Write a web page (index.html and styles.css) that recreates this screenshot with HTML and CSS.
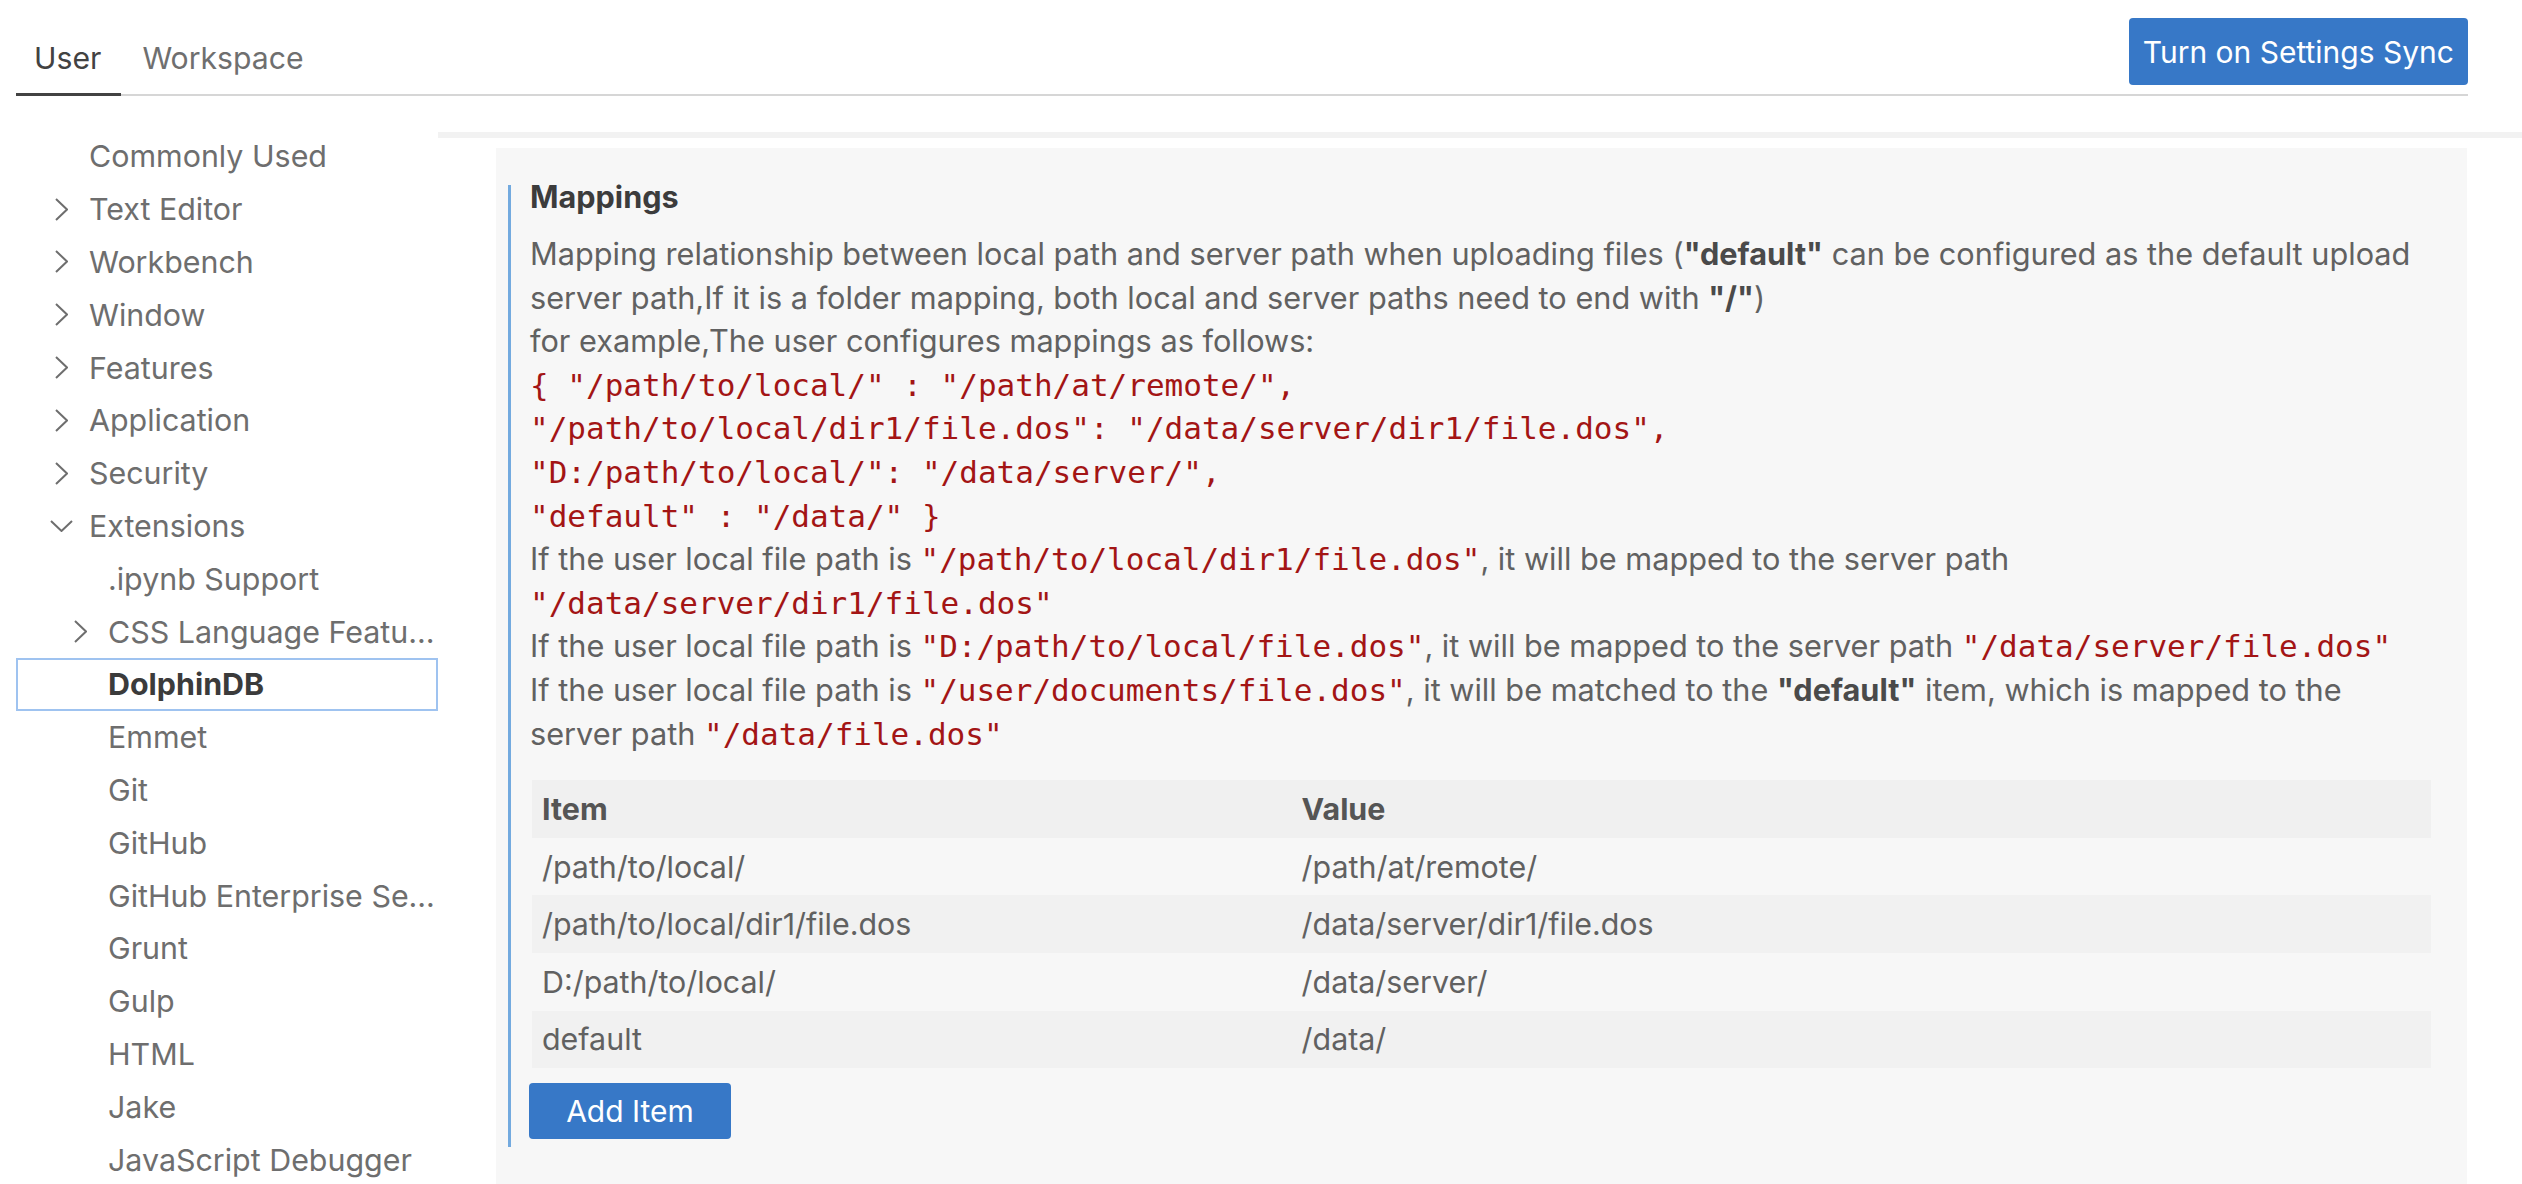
FILE: index.html
```html
<!DOCTYPE html>
<html>
<head>
<meta charset="utf-8">
<link rel="stylesheet" href="styles.css">
</head>
<body>
<div class="topbar">
  <div class="tabs">
    <div class="tab active">User</div>
    <div class="tab">Workspace</div>
  </div>
  <button class="sync-btn">Turn on Settings Sync</button>
</div>
<div class="main">
  <nav class="toc">
    <div class="row l1">Commonly Used</div>
    <div class="row l1"><svg class="chev-r" viewBox="0 0 13 23"><polyline points="1,1 12,11.5 1,22"/></svg>Text Editor</div>
    <div class="row l1"><svg class="chev-r" viewBox="0 0 13 23"><polyline points="1,1 12,11.5 1,22"/></svg>Workbench</div>
    <div class="row l1"><svg class="chev-r" viewBox="0 0 13 23"><polyline points="1,1 12,11.5 1,22"/></svg>Window</div>
    <div class="row l1"><svg class="chev-r" viewBox="0 0 13 23"><polyline points="1,1 12,11.5 1,22"/></svg>Features</div>
    <div class="row l1"><svg class="chev-r" viewBox="0 0 13 23"><polyline points="1,1 12,11.5 1,22"/></svg>Application</div>
    <div class="row l1"><svg class="chev-r" viewBox="0 0 13 23"><polyline points="1,1 12,11.5 1,22"/></svg>Security</div>
    <div class="row l1 open"><svg class="chev-d" viewBox="0 0 23 12"><polyline points="1,1 11.5,11 22,1"/></svg>Extensions</div>
    <div class="row l2">.ipynb Support</div>
    <div class="row l2"><svg class="chev-r" viewBox="0 0 13 23"><polyline points="1,1 12,11.5 1,22"/></svg><span class="lbl">CSS Language Features</span></div>
    <div class="row l2 selected">DolphinDB</div>
    <div class="row l2">Emmet</div>
    <div class="row l2">Git</div>
    <div class="row l2">GitHub</div>
    <div class="row l2"><span class="lbl">GitHub Enterprise Server Authentication</span></div>
    <div class="row l2">Grunt</div>
    <div class="row l2">Gulp</div>
    <div class="row l2">HTML</div>
    <div class="row l2">Jake</div>
    <div class="row l2">JavaScript Debugger</div>
  </nav>
  <section class="content">
    <div class="band"></div>
    <div class="panel">
      <div class="setting">
        <div class="title">Mappings</div>
        <div class="desc">
          Mapping relationship between local path and server path when uploading files (<b>"default"</b> can be configured as the default upload server path,If it is a folder mapping, both local and server paths need to end with <b>"/"</b>)<br>
          for example,The user configures mappings as follows:<br>
          <code>{ "/path/to/local/" : "/path/at/remote/",</code><br>
          <code>"/path/to/local/dir1/file.dos": "/data/server/dir1/file.dos",</code><br>
          <code>"D:/path/to/local/": "/data/server/",</code><br>
          <code>"default" : "/data/" }</code><br>
          If the user local file path is <code>"/path/to/local/dir1/file.dos"</code>, it will be mapped to the server path <code>"/data/server/dir1/file.dos"</code><br>
          If the user local file path is <code>"D:/path/to/local/file.dos"</code>, it will be mapped to the server path <code>"/data/server/file.dos"</code><br>
          If the user local file path is <code>"/user/documents/file.dos"</code>, it will be matched to the <b>"default"</b> item, which is mapped to the server path <code>"/data/file.dos"</code>
        </div>
        <table class="map-table">
          <thead>
            <tr><th class="c1">Item</th><th>Value</th></tr>
          </thead>
          <tbody>
            <tr><td>/path/to/local/</td><td>/path/at/remote/</td></tr>
            <tr class="odd"><td>/path/to/local/dir1/file.dos</td><td>/data/server/dir1/file.dos</td></tr>
            <tr><td>D:/path/to/local/</td><td>/data/server/</td></tr>
            <tr class="odd"><td>default</td><td>/data/</td></tr>
          </tbody>
        </table>
        <button class="add-btn">Add Item</button>
      </div>
    </div>
  </section>
</div>
</body>
</html>
```
FILE: styles.css
```css
html, body {
  margin: 0;
  height: 1184px;
  overflow: hidden;
  background: #ffffff;
}
body {
  font-family: Inter, "Noto Sans", sans-serif;
  color: #616161;
}
.topbar {
  display: flex;
  justify-content: space-between;
  align-items: flex-start;
  height: 94px;
  margin: 0 54px 0 16px;
  border-bottom: 2px solid #d6d6d6;
}
.tabs {
  display: flex;
  align-self: stretch;
}
.tab {
  display: flex;
  align-items: center;
  padding: 22px 20px 0 18px;
  margin-bottom: -2px;
  border-bottom: 3px solid transparent;
  font-size: 30.2px;
  color: #6f6f6f;
}
.tab + .tab {
  padding-left: 21px;
}
.tab.active {
  color: #424242;
  border-bottom-color: #424242;
}
.sync-btn {
  margin-top: 18px;
  height: 67px;
  padding: 0 14px;
  border: none;
  border-radius: 4px;
  background: #3778c7;
  color: #ffffff;
  font-family: Inter, "Noto Sans", sans-serif;
  font-size: 30px;
}
.main {
  display: flex;
  margin-top: 34px;
}
.toc {
  flex: none;
  width: 422px;
  margin-left: 16px;
}
.row {
  display: flex;
  align-items: center;
  height: 52.8px;
  box-sizing: border-box;
  font-size: 30.4px;
  color: #6e6e6e;
  white-space: nowrap;
  overflow: hidden;
  padding-right: 2px;
}
.row.l1 { padding-left: 73px; }
.row.l2 { padding-left: 92px; }
.row svg {
  flex: none;
  fill: none;
  stroke: #6e6e6e;
  stroke-width: 2;
}
.chev-r {
  width: 13px;
  height: 23px;
  margin-left: -34px;
  margin-right: 21px;
}
.chev-d {
  width: 23px;
  height: 12px;
  margin-left: -39px;
  margin-right: 16px;
}
.lbl {
  overflow: hidden;
  text-overflow: ellipsis;
  min-width: 0;
}
.row.selected {
  border: 2px solid #9fc3f0;
  padding-left: 90px;
  font-weight: 700;
  color: #3b3b3b;
}
.content {
  flex: 1;
  min-width: 0;
}
.band {
  height: 6px;
  margin-top: 2px;
  background: #f2f2f2;
}
.panel {
  margin: 10px 55px 0 58px;
  padding: 37px 36px 60px 12px;
  background: #f7f7f7;
}
.setting {
  border-left: 3px solid #73aadf;
  padding: 0 0 8px 19px;
}
.title {
  font-size: 30.6px;
  font-weight: 700;
  line-height: 24px;
  color: #3c3c3c;
}
.desc {
  margin-top: 23px;
  padding-right: 8px;
  font-size: 30.7px;
  line-height: 43.6px;
  color: #616161;
}
.desc b {
  color: #4a4a4a;
}
.desc code {
  font-family: "DejaVu Sans Mono", "Liberation Mono", monospace;
  font-size: 31px;
  line-height: 1;
  color: #a31515;
}
.map-table {
  margin-top: 25px;
  margin-left: 2px;
  width: calc(100% - 2px);
  border-collapse: collapse;
  font-size: 30.4px;
}
.map-table th,
.map-table td {
  height: 57.6px;
  padding: 0 10px;
  text-align: left;
  vertical-align: middle;
}
.map-table th {
  background: #f0f0f0;
  font-weight: 700;
  color: #555555;
}
.map-table th.c1 {
  width: 40%;
}
.map-table td {
  color: #616161;
}
.map-table tr.odd td {
  background: #f1f1f1;
}
.add-btn {
  margin-top: 15px;
  margin-left: -1px;
  width: 202px;
  height: 56px;
  border: none;
  border-radius: 4px;
  background: #3778c7;
  color: #ffffff;
  font-family: Inter, "Noto Sans", sans-serif;
  font-size: 30px;
}
```
